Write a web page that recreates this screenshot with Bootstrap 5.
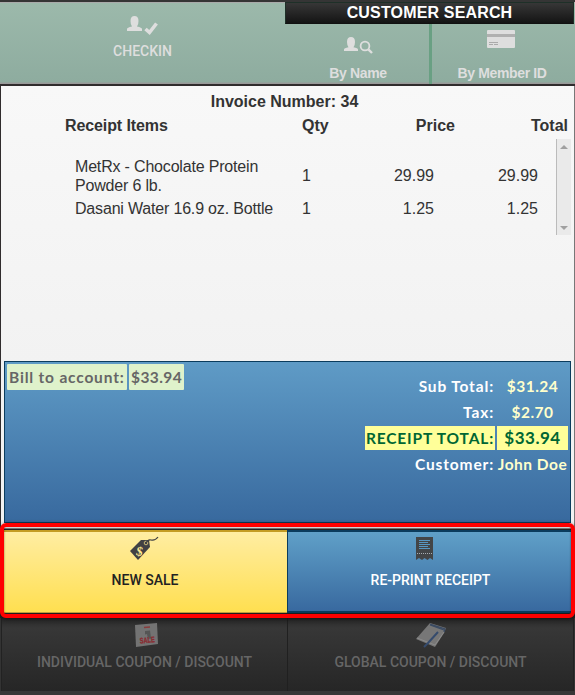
<!DOCTYPE html>
<html lang="en">
<head>
<meta charset="utf-8">
<meta name="viewport" content="width=device-width, initial-scale=1">
<title>Point of Sale</title>
<link href="https://cdn.jsdelivr.net/npm/bootstrap@5.3.0/dist/css/bootstrap.min.css" rel="stylesheet">
<style>
body{width:575px;height:695px;overflow:hidden;background:#333;color:#333;font:16px/18px "Liberation Sans",Arial,sans-serif}
svg{display:block;overflow:visible}
.topbar{height:86px;border-top:2px solid #353535;border-bottom:2px solid #302c2d;box-shadow:inset 0 1px #aaa;background:linear-gradient(#9cb9ab,#8eac9f 80px,#999 81px,#999 82px)}
.topbar{color:#dedede}
.checkin{width:285px}
.checkin svg{margin-top:15px;margin-bottom:5px}
.caps{font:500 14px/18px Roboto,sans-serif}
.search-head{height:22px;margin-right:1px;border:1px solid #1e3028;border-bottom-color:#111;background:linear-gradient(#373737,#141414);color:#fff;font-weight:700;line-height:20px;letter-spacing:.16px}
.search-opt{font-weight:700;font-size:14px;line-height:18px;letter-spacing:-.35px}
.by-name{width:144px;padding-left:2px}
.by-id{padding-right:3px}
.by-id svg{margin-bottom:14px}
.split{width:3px;background:#69a083}
.receipt{height:442px;border-left:1px solid #302c2d;border-right:1px solid #777;background:linear-gradient(#f8f8f8,#f2f2f2 276px)}
.receipt-title{height:31px;padding-top:7px;padding-right:6px;font-weight:700}
.line-grid{display:grid;grid-template-columns:237px 69px 84px 113px}
.heads{height:22px;padding-left:64px;font-weight:700}
.heads span:first-child{letter-spacing:-.1px}
.items{height:96px;padding:18px 0 0 74px;grid-template-columns:227px 54px 78px 104px;width:555px;align-content:start;row-gap:4px;align-items:center;line-height:19px}
.items span:nth-child(4n+1){letter-spacing:-.18px}
.items span:nth-child(-n+4):not(:first-child){padding-bottom:2px}
.scroll-rail{width:15px;background:#eaeaea;border-left:1px solid #bbb;padding:6px 0 5px 3px}
.account{height:162px;margin:126px 3px 0;border:1px solid #0b3c5d;background:linear-gradient(#5f9bc6,#38699e);font:700 15.5px/26px Lato,sans-serif}
.bill{gap:2px;padding:2px}
.bill span{height:26px;line-height:27px;background:#dff2cb;color:#666;border-radius:1px;padding-left:2px;white-space:nowrap}
.bill-label{width:120px;letter-spacing:.82px}
.bill-value{width:55px;letter-spacing:.4px}
.totals{display:grid;grid-template-columns:130px 71px;column-gap:2px;grid-auto-rows:26px;color:#fff;padding:11px 2px 0 0;white-space:nowrap}
.totals span:nth-child(even){color:#ffc;text-align:center;letter-spacing:.5px}
.totals span:nth-child(odd){text-align:right;padding-right:1px;letter-spacing:.85px}
.totals .grand{background:#ff9;color:#063!important;height:24px;margin-top:1px;line-height:24px}
.grand-value{font-size:17px}
.actions{height:90px;padding:0 3px 0 4px;border-top:1px solid #777;box-shadow:inset 0 2px #222;background:#222}
.actions .tile{height:83px;margin-top:1px;padding-top:5px}
.sale{width:283px;padding-right:1px;border-top:2px solid #c49c24;border-bottom:1px solid #c4a13b;background:linear-gradient(#ffeda2,#ffdf50);color:#222}
.sale svg{margin-right:3px;margin-bottom:11px}
.reprint{background:linear-gradient(#60a0c8,#38699f);border:1px solid #0b3c5d;border-top-width:2px;border-bottom-width:2px;color:#fff}
.reprint svg{margin-right:10px;margin-bottom:11px}
.reprint div{margin-left:2px}
.coupons{height:73px;margin-left:1px;margin-right:1px;background:linear-gradient(#262626,#373737 10px,#262626);color:#666;border-left:1px solid #222;border-right:1px solid #222}
.coupons>div:first-child{width:286px;border-right:1px solid #202020}
.coupons svg{margin-top:5px;margin-bottom:6px}
.sale-sign{margin-left:4px}
.foot{height:4px;background:#373737}
.focus-frame{position:absolute;left:0;top:523px;width:575px;height:95px;border:4px solid #f00;border-radius:6px;box-shadow:0 1px 4px #0008,inset 0 0 2px #0008;pointer-events:none}
</style>
</head>
<body class="position-relative">
<header class="topbar d-flex">
  <div class="checkin d-flex flex-column align-items-center">
    <svg width="31" height="20" viewBox="0 0 31 20"><path fill="#dedede" d="M0 14v-2q0-1.500 5-2.500Q3.500 8 3.500 4 3.500-1 7.500-1T11.500 4q0 4-1.500 5.500 5 1 5 2.500v2z"/><path d="M18.500 12l4 3.500 7-9" fill="none" stroke="#dedede" stroke-width="3.600"/></svg>
    <div class="caps">CHECKIN</div>
  </div>
  <div class="flex-fill d-flex flex-column">
    <div class="search-head text-center">CUSTOMER SEARCH</div>
    <div class="d-flex flex-fill search-opt">
      <div class="by-name d-flex flex-column align-items-center">
        <svg class="mt-3" width="29" height="20" viewBox="0 0 29 20"><path fill="#dedede" d="M0 11V9.500Q0 8 4.500 7.300 3 5.500 3 2q0-5 4-5t4 5q0 3.500-1.500 5.300Q14 8 14 9.500V11z"/><circle cx="21" cy="6" r="4.400" fill="none" stroke="#dedede" stroke-width="1.800"/><path d="M24.300 9.300L28 13" stroke="#dedede" stroke-width="2.400"/></svg>
        <div class="mt-1">By Name</div>
      </div>
      <div class="split"></div>
      <div class="by-id flex-fill d-flex flex-column align-items-center">
        <svg class="mt-2" width="28" height="18" viewBox="1 2 28 18"><rect width="28" height="18" rx="1" fill="#dedede"/><path d="M0 5.500h28" stroke="#b0b0b0" stroke-width="3"/><path d="M2 12.500h9M2 14.500h4M7 14.500h4" stroke="#aaa"/></svg>
        <div>By Member ID</div>
      </div>
    </div>
  </div>
</header>
<main class="receipt">
  <div class="receipt-title text-center">Invoice Number: 34</div>
  <div class="line-grid heads"><span>Receipt Items</span><span>Qty</span><span class="text-end">Price</span><span class="text-end">Total</span></div>
  <div class="d-flex">
    <div class="line-grid items">
      <span>MetRx - Chocolate Protein<br>Powder 6 lb.</span><span>1</span><span class="text-end">29.99</span><span class="text-end">29.99</span>
      <span>Dasani Water 16.9 oz. Bottle</span><span>1</span><span class="text-end">1.25</span><span class="text-end">1.25</span>
    </div>
    <div class="scroll-rail d-flex flex-column justify-content-between">
      <svg width="8" height="4"><path d="M0 4l4-4 4 4z" fill="#a0a0a0"/></svg>
      <svg width="8" height="4"><path d="M0 0h8L4 4z" fill="#a0a0a0"/></svg>
    </div>
  </div>
  <section class="account d-flex justify-content-between">
    <div class="bill d-flex"><span class="bill-label">Bill to account:</span><span class="bill-value">$33.94</span></div>
    <div class="totals">
      <span>Sub Total:</span><span>$31.24</span><span>Tax:</span><span>$2.70</span>
      <span class="grand">RECEIPT TOTAL:</span><span class="grand grand-value">$33.94</span>
      <span>Customer:</span><span>John Doe</span>
    </div>
  </section>
</main>
<div class="actions d-flex">
  <div class="tile sale d-flex flex-column align-items-center caps">
    <svg width="28" height="23" viewBox="0 0 28 23"><path fill="#414143" d="M0 14L11 3l8 0 1 7L8 23z"/><circle cx="16" cy="6" r="1.800" fill="none" stroke="#c9b878"/><path d="M16 6q2-4 5-3 4 1 7-3" fill="none" stroke="#414143" stroke-width="1.200"/><text transform="translate(5.500 18) rotate(12)" font-family="Liberation Serif,serif" font-size="13" font-weight="700" fill="#ffe991">$</text></svg>
    <div>NEW SALE</div>
  </div>
  <div class="tile reprint flex-fill d-flex flex-column align-items-center caps">
    <svg width="17" height="23" viewBox="0 0 17 23"><path fill="#434547" d="M0 0h17v23l-3-2-2.500 2L8.500 21 6 23l-3-2-3 2z"/><path d="M3 3.500h11M3 5.500h9M3 7.500h11M3 9.500h9M3 11.500h11" stroke="#5796c2"/><path d="M1 16.500h16" stroke="#a7adb2" stroke-dasharray="1 1"/></svg>
    <div>RE-PRINT RECEIPT</div>
  </div>
</div>
<div class="coupons d-flex caps">
  <div class="d-flex flex-column align-items-center">
    <svg class="sale-sign" width="23" height="24" viewBox="0 0 23 24"><path fill="#737373" d="M0 2L22 0l1 21-22 3z"/><path d="M9 4.500l6-.5" stroke="#893c3c" stroke-width="1.500"/><path d="M10 8l5-.5 1 8-3 .5-1-5-2 .5z" fill="#555"/><text x="5" y="20.500" transform="rotate(-5 5 21)" font-family="Liberation Sans" font-weight="700" font-size="8" textLength="15" lengthAdjust="spacingAndGlyphs" fill="#8b292f" stroke="#8b292f" stroke-width=".3">SALE</text></svg>
    <div>INDIVIDUAL COUPON / DISCOUNT</div>
  </div>
  <div class="flex-fill d-flex flex-column align-items-center">
    <svg width="30" height="24" viewBox="0 0 30 24"><path fill="#777" d="M14 0l16 5-2 5-9 14L0 16z"/><path d="M14 1l15 5-1 3M14 2l14 5" fill="none" stroke="#3b4b63" stroke-width="1.300"/><path d="M1 15l18 7 9-13" fill="none" stroke="#8b8b8b"/><path d="M22 9L12 20l-4 4" fill="none" stroke="#354b6d" stroke-width="2"/></svg>
    <div>GLOBAL COUPON / DISCOUNT</div>
  </div>
</div>
<div class="foot"></div>
<div class="focus-frame"></div>
<script src="https://cdn.jsdelivr.net/npm/bootstrap@5.3.0/dist/js/bootstrap.bundle.min.js"></script>
</body>
</html>
